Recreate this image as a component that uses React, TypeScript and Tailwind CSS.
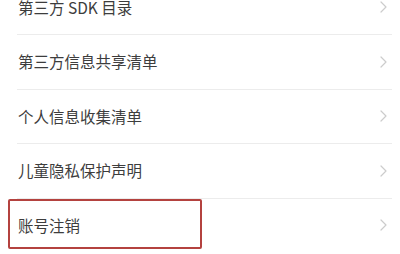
const items = ['第三方 SDK 目录', '第三方信息共享清单', '个人信息收集清单', '儿童隐私保护声明', '账号注销'];

function Chevron() {
    return (
        <svg width="7" height="12" viewBox="0 0 7 12" fill="none" className="text-[#cccccc]">
            <polyline points="1,1 6,6 1,11" stroke="currentColor" strokeWidth="1.2" strokeLinecap="round" strokeLinejoin="round" />
        </svg>
    );
}

export default function App() {
    return (
        <div className="relative w-[400px] h-[254px] overflow-hidden bg-white font-['Noto_Sans_CJK_SC',sans-serif]">
            <div className="-mt-[19.5px]">
                {items.map((label, i) => (
                    <div key={label} className="flex flex-col">
                        {i > 0 && <div className="ml-[17px] mr-[8px] h-px bg-[#ececec]" />}
                        <div className="flex items-center h-[53.5px] pl-[18px] pr-[13px]">
                            <span className="flex-1 text-[15.5px] text-[#3d3d3d] leading-none">{label}</span>
                            <Chevron />
                        </div>
                    </div>
                ))}
            </div>
            {/* highlight box */}
            <div className="absolute left-[8px] top-[199px] w-[194px] h-[50px] border-2 border-[#b4423f] rounded-[2px]" />
        </div>
    );
}
